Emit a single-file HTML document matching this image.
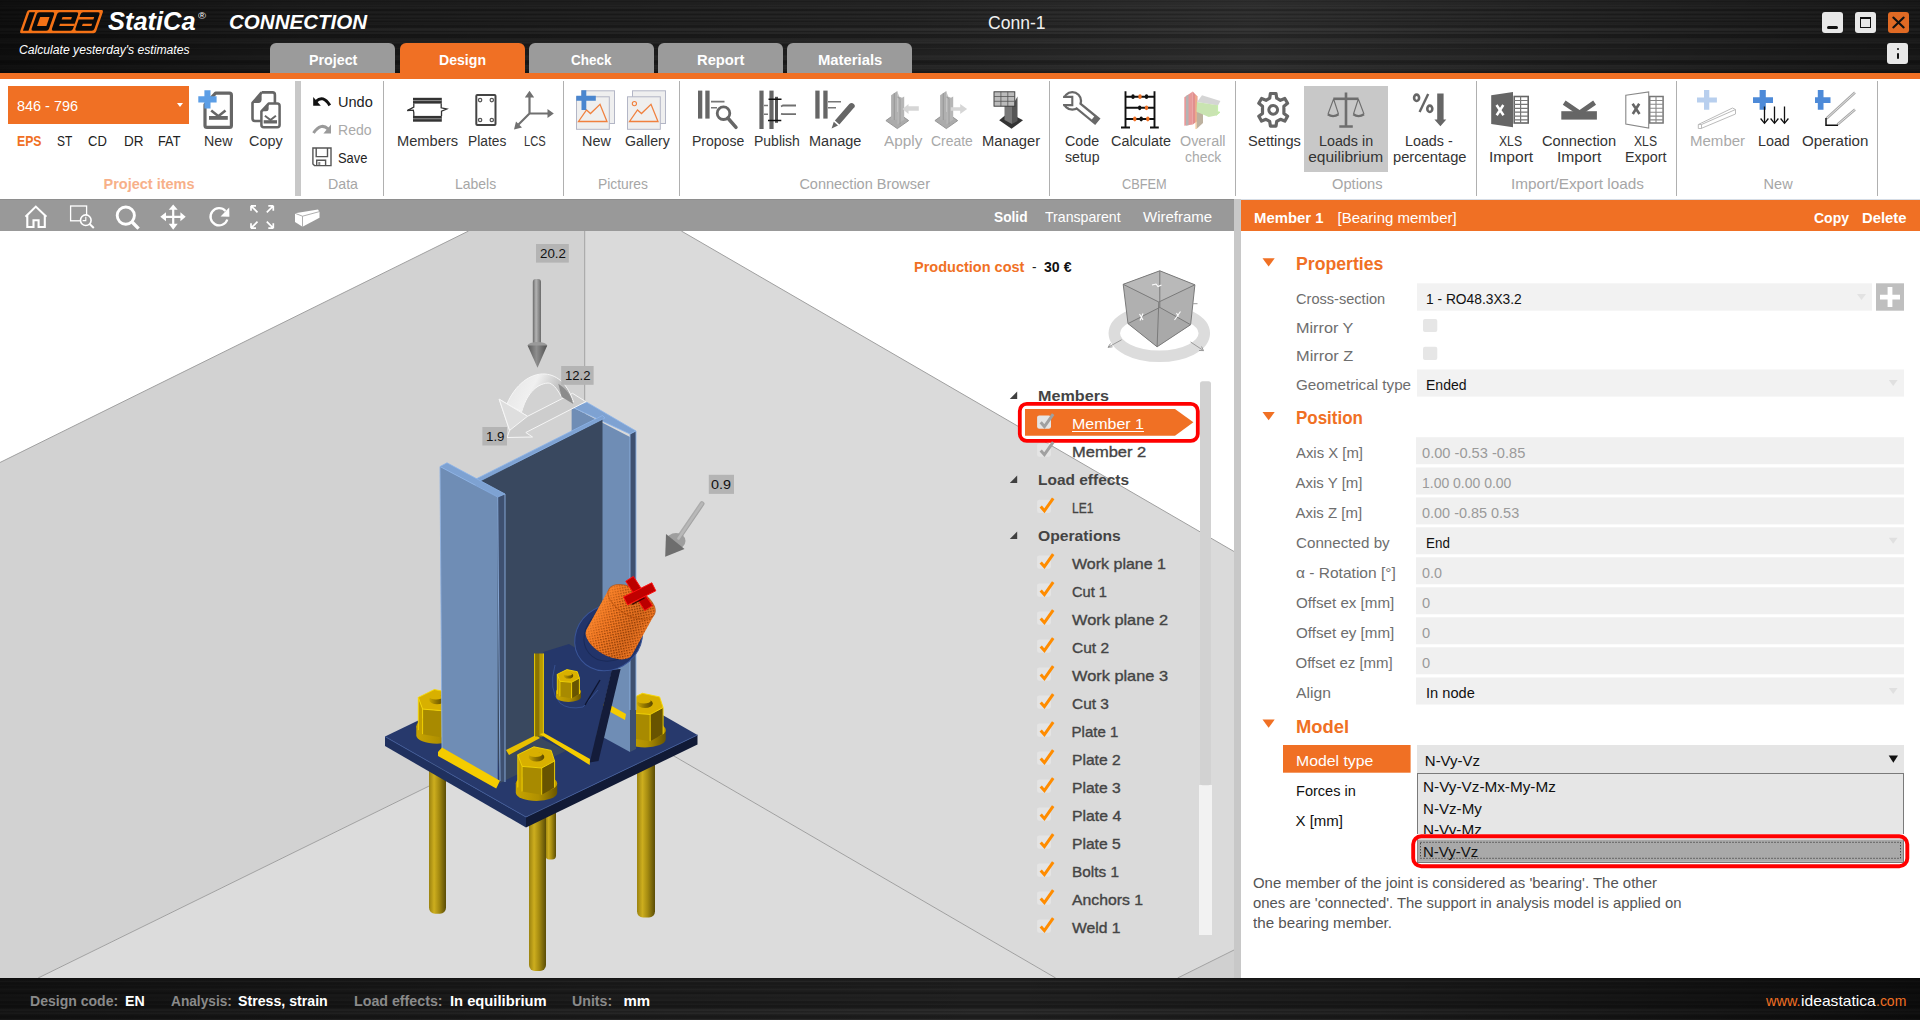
<!DOCTYPE html>
<html><head><meta charset="utf-8"><style>
*{margin:0;padding:0;box-sizing:border-box}
html,body{width:1920px;height:1020px;overflow:hidden;background:#fff;font-family:"Liberation Sans",sans-serif}
.a{position:absolute}
.t{position:absolute;white-space:pre;line-height:1;transform-origin:0 0}
svg{position:absolute;overflow:visible}
</style></head><body>
<!-- title bar -->
<div class="a" style="left:0;top:0;width:1920px;height:73px;background:linear-gradient(90deg, rgba(0,0,0,0.6) 0px, rgba(0,0,0,0.3) 300px, rgba(0,0,0,0.05) 900px, rgba(255,255,255,0.04) 1250px, rgba(0,0,0,0.05) 1550px, rgba(0,0,0,0.35) 1920px),linear-gradient(180deg,#252525 0px, #252525 1px,#1f1f1f 1px, #1f1f1f 2px,#242424 2px, #242424 3px,#242424 3px, #242424 4px,#242424 4px, #242424 5px,#292929 5px, #292929 6px,#232323 6px, #232323 7px,#2a2a2a 7px, #2a2a2a 8px,#272727 8px, #272727 9px,#1d1d1d 9px, #1d1d1d 10px,#1c1c1c 10px, #1c1c1c 11px,#262626 11px, #262626 12px,#292929 12px, #292929 13px,#242424 13px, #242424 14px,#1d1d1d 14px, #1d1d1d 15px,#252525 15px, #252525 16px,#292929 16px, #292929 17px,#242424 17px, #242424 18px,#1f1f1f 18px, #1f1f1f 19px,#292929 19px, #292929 20px,#232323 20px, #232323 21px,#1d1d1d 21px, #1d1d1d 22px,#252525 22px, #252525 23px,#242424 23px, #242424 24px,#262626 24px, #262626 25px,#1e1e1e 25px, #1e1e1e 26px,#1d1d1d 26px, #1d1d1d 27px,#202020 27px, #202020 28px,#2c2c2c 28px, #2c2c2c 29px,#303030 29px, #303030 30px,#2c2c2c 30px, #2c2c2c 31px,#202020 31px, #202020 32px,#292929 32px, #292929 33px,#2a2a2a 33px, #2a2a2a 34px,#1c1c1c 34px, #1c1c1c 35px,#1c1c1c 35px, #1c1c1c 36px,#1d1d1d 36px, #1d1d1d 37px,#1c1c1c 37px, #1c1c1c 38px,#262626 38px, #262626 39px,#282828 39px, #282828 40px,#2a2a2a 40px, #2a2a2a 41px,#272727 41px, #272727 42px,#2c2c2c 42px, #2c2c2c 43px,#262626 43px, #262626 44px,#1d1d1d 44px, #1d1d1d 45px,#1e1e1e 45px, #1e1e1e 46px,#1f1f1f 46px, #1f1f1f 47px,#1f1f1f 47px, #1f1f1f 48px,#272727 48px, #272727 49px,#1f1f1f 49px, #1f1f1f 50px,#202020 50px, #202020 51px,#212121 51px, #212121 52px,#212121 52px, #212121 53px,#212121 53px, #212121 54px,#212121 54px, #212121 55px,#272727 55px, #272727 56px,#2a2a2a 56px, #2a2a2a 57px,#282828 57px, #282828 58px,#272727 58px, #272727 59px,#282828 59px, #282828 60px,#1d1d1d 60px, #1d1d1d 61px,#1a1a1a 61px, #1a1a1a 62px,#191919 62px, #191919 63px,#1d1d1d 63px, #1d1d1d 64px,#1e1e1e 64px, #1e1e1e 65px,#292929 65px, #292929 66px,#272727 66px, #272727 67px,#262626 67px, #262626 68px,#282828 68px, #282828 69px,#212121 69px, #212121 70px,#222222 70px, #222222 71px,#1c1c1c 71px, #1c1c1c 72px,#1a1a1a 72px, #1a1a1a 73px)"></div>
<!-- tabs -->
<div class="a" style="left:270px;top:43px;width:125px;height:30px;background:#9b9b9b;border-radius:6px 6px 0 0"></div>
<div class="a" style="left:400px;top:43px;width:125px;height:30px;background:#f07024;border-radius:6px 6px 0 0"></div>
<div class="a" style="left:529px;top:43px;width:125px;height:30px;background:#9b9b9b;border-radius:6px 6px 0 0"></div>
<div class="a" style="left:658px;top:43px;width:125px;height:30px;background:#9b9b9b;border-radius:6px 6px 0 0"></div>
<div class="a" style="left:787px;top:43px;width:125px;height:30px;background:#9b9b9b;border-radius:6px 6px 0 0"></div>
<div class="a" style="left:0;top:73px;width:1920px;height:6px;background:#f07024"></div>
<!-- ribbon -->
<div class="a" style="left:0;top:79px;width:1920px;height:120px;background:#fff"></div>

<div class="a" style="left:8px;top:86px;width:181px;height:38px;background:#f07024"></div>
<svg style="left:0;top:0" width="1" height="1"><path d="M177 103 L183 103 L180 107 Z" fill="#fff"/></svg>
<div class="a" style="left:295px;top:81px;width:6px;height:115px;background:#c8c8c8"></div>
<div class="a" style="left:383px;top:81px;width:1px;height:115px;background:#b0b0b0"></div>
<div class="a" style="left:563px;top:81px;width:1px;height:115px;background:#b0b0b0"></div>
<div class="a" style="left:679px;top:81px;width:1px;height:115px;background:#b0b0b0"></div>
<div class="a" style="left:1049px;top:81px;width:1px;height:115px;background:#b0b0b0"></div>
<div class="a" style="left:1235px;top:81px;width:1px;height:115px;background:#b0b0b0"></div>
<div class="a" style="left:1476px;top:81px;width:1px;height:115px;background:#b0b0b0"></div>
<div class="a" style="left:1676px;top:81px;width:1px;height:115px;background:#b0b0b0"></div>
<div class="a" style="left:1877px;top:81px;width:1px;height:115px;background:#b0b0b0"></div>
<div class="a" style="left:1304px;top:86px;width:84px;height:86px;background:#c8c8c8"></div>
<!-- viewport toolbar -->
<div class="a" style="left:0;top:199px;width:1234px;height:32px;background:#999999;border-top:1px solid #8e8e8e"></div>
<div class="a" style="left:1234px;top:199px;width:7px;height:779px;background:#c8c8c8"></div>
<!-- right panel -->
<div class="a" style="left:1241px;top:199px;width:679px;height:32px;background:#f07024;border-top:1px solid #d6dde6"></div>
<div class="a" style="left:1241px;top:231px;width:679px;height:747px;background:#fff"></div>
<!-- status bar -->
<div class="a" style="left:0;top:978px;width:1920px;height:42px;background:linear-gradient(90deg, rgba(0,0,0,0.45) 0px, rgba(0,0,0,0.15) 600px, rgba(0,0,0,0) 1000px, rgba(0,0,0,0.2) 1400px, rgba(0,0,0,0.6) 1920px),linear-gradient(180deg,#191919 0px, #191919 1px,#1e1e1e 1px, #1e1e1e 2px,#1f1f1f 2px, #1f1f1f 3px,#282828 3px, #282828 4px,#1d1d1d 4px, #1d1d1d 5px,#1b1b1b 5px, #1b1b1b 6px,#1c1c1c 6px, #1c1c1c 7px,#202020 7px, #202020 8px,#1b1b1b 8px, #1b1b1b 9px,#1c1c1c 9px, #1c1c1c 10px,#202020 10px, #202020 11px,#252525 11px, #252525 12px,#202020 12px, #202020 13px,#1e1e1e 13px, #1e1e1e 14px,#1a1a1a 14px, #1a1a1a 15px,#191919 15px, #191919 16px,#212121 16px, #212121 17px,#232323 17px, #232323 18px,#212121 18px, #212121 19px,#1f1f1f 19px, #1f1f1f 20px,#202020 20px, #202020 21px,#222222 21px, #222222 22px,#232323 22px, #232323 23px,#1b1b1b 23px, #1b1b1b 24px,#1a1a1a 24px, #1a1a1a 25px,#1d1d1d 25px, #1d1d1d 26px,#202020 26px, #202020 27px,#191919 27px, #191919 28px,#191919 28px, #191919 29px,#1b1b1b 29px, #1b1b1b 30px,#212121 30px, #212121 31px,#2b2b2b 31px, #2b2b2b 32px,#2c2c2c 32px, #2c2c2c 33px,#232323 33px, #232323 34px,#272727 34px, #272727 35px,#2c2c2c 35px, #2c2c2c 36px,#222222 36px, #222222 37px,#1e1e1e 37px, #1e1e1e 38px,#1b1b1b 38px, #1b1b1b 39px,#1c1c1c 39px, #1c1c1c 40px,#1e1e1e 40px, #1e1e1e 41px,#2c2c2c 41px, #2c2c2c 42px)"></div>
<!-- logo -->
<svg style="left:0;top:0" width="1" height="1">
 <g transform="translate(0,9.9) skewX(-19.2)">
  <rect x="27.6" y="0" width="76" height="23.3" rx="2" fill="#f47216"/>
  <rect x="30.2" y="2.3" width="5.6" height="18.6" fill="#0a0a0a"/>
  <rect x="38.2" y="2.3" width="17.4" height="18.6" rx="2" fill="#0a0a0a"/>
  <rect x="42.6" y="7" width="9.4" height="9" fill="#f47216"/>
  <rect x="58.5" y="2.3" width="21.1" height="18.6" rx="2" fill="#0a0a0a"/>
  <rect x="65" y="7.2" width="9.4" height="2.3" fill="#f47216"/>
  <rect x="64.8" y="13.9" width="15" height="2.2" fill="#f47216"/>
  <rect x="82" y="2.3" width="19" height="18.6" rx="2" fill="#0a0a0a"/>
  <rect x="81.5" y="7.2" width="15.2" height="2.3" fill="#f47216"/>
  <rect x="87.6" y="13.9" width="9.4" height="2.2" fill="#f47216"/>
 </g>
</svg>
<div class="a" style="left:1822px;top:12px;width:21px;height:21px;background:#e8e8e8;border-radius:3px"></div>
<div class="a" style="left:1827px;top:26px;width:11px;height:2.6px;background:#111;border-radius:2px"></div>
<div class="a" style="left:1855px;top:12px;width:21px;height:21px;background:#e8e8e8;border-radius:3px"></div>
<div class="a" style="left:1860px;top:17px;width:11px;height:11px;border:1.6px solid #111;border-top-width:2.4px"></div>
<div class="a" style="left:1888px;top:12px;width:21px;height:21px;background:#e06a24;border-radius:3px"></div>
<svg style="left:0;top:0" width="1" height="1"><path d="M1893.3 17.6 L1903.7 27.4 M1903.7 17.6 L1893.3 27.4" stroke="#111" stroke-width="2.1" stroke-linecap="round"/></svg>
<div class="a" style="left:1887px;top:43px;width:21px;height:21px;background:#e8e8e8;border-radius:3px"></div>
<div class="a" style="left:1897.3px;top:48.4px;width:2px;height:2px;background:#111;border-radius:1px"></div>
<div class="a" style="left:1897.2px;top:52.8px;width:2.2px;height:6.4px;background:#111;border-radius:1px"></div>

<svg style="left:0;top:0" width="1920" height="200" viewBox="0 0 1920 200">
<!-- New (project) -->
<path d="M215.6 93.2 H229.5 Q231.4 93.2 231.4 95.2 V125.5 Q231.4 127.4 229.5 127.4 H207 Q205 127.4 205 125.5 V104.5 Z" fill="none" stroke="#666" stroke-width="3.2" stroke-linejoin="round"/>
<path d="M209 116 H227.8 V119.8 H209 Z" fill="#666"/>
<path d="M211.2 110.4 L218.4 116.2 L225.5 110.4" fill="none" stroke="#666" stroke-width="2.6"/>
<path d="M204.4 90.2 H210.5 V96.3 H216.6 V102.4 H210.5 V108.5 H204.4 V102.4 H198.3 V96.3 H204.4 Z" fill="#5c9ee6"/>
<!-- Copy -->
<path d="M261.6 92.4 H272.5 Q274.9 92.4 274.9 94.8 V103 M261.5 121 H254.8 Q252.5 121 252.5 118.6 V102.9 L261.6 92.4" fill="none" stroke="#666" stroke-width="2.6" stroke-linejoin="round"/>
<path d="M252.5 102.9 L261.6 92.4 V99.5 Q261.6 102.9 258.4 102.9 Z" fill="#666"/>
<path d="M268.6 103.6 H277.3 Q279.6 103.6 279.6 106 V125 Q279.6 127.2 277.3 127.2 H263.8 Q261.4 127.2 261.4 125 V111.3 Z" fill="#fff" stroke="#666" stroke-width="2.5" stroke-linejoin="round"/>
<path d="M261.4 111.3 L268.6 103.6 V108.8 Q268.6 111.3 266 111.3 Z" fill="#666"/>
<path d="M263.7 120.2 H277 V123.5 H263.7 Z" fill="#666"/>
<path d="M264.9 115.8 L270.5 120 L275.9 115.8" fill="none" stroke="#666" stroke-width="2"/>
<!-- Undo / Redo / Save -->
<path d="M313.2 97 V105.7 H320.8 Z" fill="#111"/>
<path d="M316.2 101.3 Q323 94.5 329.8 105.4" fill="none" stroke="#111" stroke-width="3"/>
<path d="M331 124.6 V133.5 H323.4 Z" fill="#9a9a9a"/>
<path d="M328 128.9 Q321 122.3 313.5 133" fill="none" stroke="#9a9a9a" stroke-width="3"/>
<path d="M312.9 148 H331 V165.6 H314.5 L312.9 164 Z" fill="none" stroke="#555" stroke-width="1.4"/>
<path d="M316.2 148 V156.6 H327.5 V148" fill="none" stroke="#555" stroke-width="1.4"/>
<path d="M316.7 165.6 V160.2 H325.6 V165.6" fill="none" stroke="#555" stroke-width="1.4"/>
<rect x="318.3" y="162" width="2" height="3" fill="#888"/>
<!-- Members -->
<rect x="413" y="97.8" width="28.8" height="5.8" fill="#333"/>
<rect x="413" y="115.9" width="28.8" height="5.8" fill="#333"/>
<rect x="413" y="100" width="28.8" height="1.1" fill="#8a8a8a"/>
<rect x="413" y="118.2" width="28.8" height="1.1" fill="#8a8a8a"/>
<path d="M413 97 V122.5 M441.8 97 V122.5" stroke="#333" stroke-width="1.2" fill="none" opacity="0"/>
<path d="M413.8 103.5 V107.2 L407.2 110.6 L413.3 110.2 L413.8 112.5 V116 M441.2 103.5 V107.8 L446.8 109 L441.5 111.2 V116" fill="none" stroke="#333" stroke-width="1.3"/>
<!-- Plates -->
<rect x="476.3" y="95" width="19.2" height="30" rx="1" fill="none" stroke="#444" stroke-width="2"/>
<g fill="none" stroke="#555" stroke-width="1.2"><circle cx="480.1" cy="100.1" r="1.7"/><circle cx="491.8" cy="100.1" r="1.7"/><circle cx="480.1" cy="120" r="1.7"/><circle cx="491.8" cy="120" r="1.7"/></g>
<!-- LCS -->
<path d="M529.5 113.5 V96 M529.5 113.5 H548 M529.5 113.5 L518.5 124.5" fill="none" stroke="#707070" stroke-width="2.2"/>
<path d="M524.8 97.5 L529.5 90.8 L534.2 97.5 Z M547.5 109 L553.8 113.5 L547.5 118 Z M514 129.5 L516 121.5 L522 127.5 Z" fill="#707070"/>
<!-- Pictures New -->
<rect x="581.5" y="90.8" width="33" height="32.7" fill="#efefef" stroke="#b3b6c6" stroke-width="1"/>
<rect x="576.5" y="96.8" width="32.8" height="32.5" fill="#efefef" stroke="#b3b6c6" stroke-width="1"/>
<path d="M578.5 121.5 L586.5 110 L590.5 113.5 L600 104.3 L607 121.5 Z" fill="none" stroke="#f0803e" stroke-width="1.3"/>
<path d="M581.5 90.3 H586.3 V95.8 H595.8 V100.8 H586.3 V110 H581.5 V100.8 H576.3 V95.8 H581.5 Z" fill="#4a86cf"/>
<!-- Gallery -->
<rect x="632.5" y="90.8" width="33" height="32.7" fill="#efefef" stroke="#b3b6c6" stroke-width="1"/>
<rect x="627.5" y="96.8" width="32.8" height="32.5" fill="#efefef" stroke="#b3b6c6" stroke-width="1"/>
<path d="M629.5 121.5 L637.5 110 L641.5 113.5 L651 104.3 L658 121.5 Z" fill="none" stroke="#f0803e" stroke-width="1.3"/>
<circle cx="634.4" cy="103.6" r="2.1" fill="none" stroke="#f0803e" stroke-width="1.1"/>
<!-- Propose -->
<rect x="698" y="90.6" width="4.3" height="28" fill="#666"/><rect x="705.3" y="90.6" width="4.3" height="28" fill="#666"/>
<path d="M711 101.6 H724.5 M711 107.8 H717" stroke="#777" stroke-width="1.6"/>
<circle cx="723.5" cy="113.2" r="6.3" fill="#fff" stroke="#666" stroke-width="2.8"/>
<path d="M727.8 118 L736 127.3" stroke="#666" stroke-width="3.5" stroke-linecap="round"/>
<!-- Publish -->
<rect x="759.4" y="90.6" width="4.2" height="38.4" fill="#666"/><rect x="769.4" y="90.6" width="4.2" height="38.4" fill="#666"/>
<path d="M764 105.5 H768 M764 114.2 H768" stroke="#777" stroke-width="1.6"/>
<rect x="775" y="96.8" width="3" height="26" fill="#555"/>
<path d="M768.5 99.3 H781.5 M768 120.5 H781.3" stroke="#111" stroke-width="1.6"/>
<path d="M781 106.5 L783 105.5 H796 M781 113.8 L783 114.2 H796" fill="none" stroke="#707070" stroke-width="1.8"/>
<!-- Manage -->
<rect x="815.3" y="90.6" width="4.3" height="28" fill="#666"/><rect x="823.3" y="90.6" width="4.3" height="28" fill="#666"/>
<path d="M828 101.8 H841 M828 107.8 H836" stroke="#777" stroke-width="1.6"/>
<path d="M839.4 124.4 L834.9 120.4 L849.3 104.1 Q851.5 101.8 853.8 104 Q856 106.2 853.7 108.1 Z" fill="#666"/>
<path d="M833.8 121.8 L838 125.6 L831.6 128.6 Z" fill="#666"/>
<!-- Apply (disabled) -->
<g transform="translate(0 0)">
<path d="M885.9 120.6 L897.3 112.4 L908.7 120.6 L897.3 128.6 Z" fill="#ababab" stroke="#8e8e8e" stroke-width="0.9"/>
<path d="M891.1 95.2 L897.3 90.9 V119.5 L891.1 120.1 Z" fill="#b0b0b0"/>
<path d="M894.3 93 V120" stroke="#909090" stroke-width="0.8"/>
<path d="M897.3 90.9 V124.6 L904.2 119.8 V96.5 L902 97.8 L899 96.5 Z" fill="#b6b6b6"/>
<path d="M897.3 97 L900 98.5 V124.3" stroke="#959595" stroke-width="0.8" fill="none"/>
</g>
<path d="M902.5 109 L908.5 104 V106.3 H918.8 V110.7 H908.5 V114 Z" fill="#d6d6d6"/>
<!-- Create (disabled) -->
<g transform="translate(49 0)">
<path d="M885.9 120.6 L897.3 112.4 L908.7 120.6 L897.3 128.6 Z" fill="#ababab" stroke="#8e8e8e" stroke-width="0.9"/>
<path d="M891.1 95.2 L897.3 90.9 V119.5 L891.1 120.1 Z" fill="#b0b0b0"/>
<path d="M894.3 93 V120" stroke="#909090" stroke-width="0.8"/>
<path d="M897.3 90.9 V124.6 L904.2 119.8 V96.5 L902 97.8 L899 96.5 Z" fill="#b6b6b6"/>
<path d="M897.3 97 L900 98.5 V124.3" stroke="#959595" stroke-width="0.8" fill="none"/>
</g>
<path d="M967.1 109 L960.2 104 V107.3 H950.8 V110.7 H960.2 V114 Z" fill="#d6d6d6"/>
<!-- Manager -->
<path d="M999.2 120.3 L1008.6 112.5 L1023 120.3 L1011.5 128.7 Z" fill="#333"/>
<path d="M1004.5 106 H1012 V124 L1004.5 120 Z" fill="#777"/><path d="M1012 106 L1017.5 96.5 V121 L1012 124 Z" fill="#555"/>
<rect x="994" y="91.8" width="20.8" height="14.4" fill="#bbb" stroke="#333" stroke-width="0.9"/>
<path d="M994 96.5 H1014.8 M994 101.3 H1014.8 M1000.9 91.8 V106.2 M1007.8 91.8 V106.2" stroke="#555" stroke-width="0.8"/>
<!-- Code setup (wrench) -->
<path d="M1072.3 100.9 L1094.6 119.2" stroke="#686868" stroke-width="8.4" stroke-linecap="square"/>
<circle cx="1072.3" cy="100.9" r="9.9" fill="#686868"/>
<circle cx="1072.3" cy="100.9" r="7.6" fill="#fff"/>
<path d="M1076 104 L1093 117.9" stroke="#fff" stroke-width="3.9"/>
<rect x="1060" y="97.9" width="12.3" height="6.2" fill="#fff"/>
<path d="M1063.2 96.9 H1072.3 V105.1 H1063.2" fill="none" stroke="#686868" stroke-width="2.1"/>
<!-- Calculate (abacus) -->
<path d="M1125.5 91.2 V127.5 M1154.5 91.2 V127.5 M1121 127.5 H1130 M1150 127.5 H1158.8 M1125.5 96.7 H1154.5 M1125.5 107.8 H1154.5 M1125.5 119 H1154.5" fill="none" stroke="#111" stroke-width="1.9"/>
<g fill="#111"><ellipse cx="1133" cy="96.7" rx="1.7" ry="2.4"/><ellipse cx="1146.5" cy="96.7" rx="1.7" ry="2.4"/><ellipse cx="1139.7" cy="107.8" rx="1.7" ry="2.4"/><ellipse cx="1141.2" cy="119" rx="1.7" ry="2.4"/></g>
<g fill="#f07024"><ellipse cx="1140" cy="96.7" rx="1.7" ry="2.4"/><ellipse cx="1146.5" cy="107.8" rx="1.7" ry="2.4"/><ellipse cx="1134.8" cy="119" rx="1.7" ry="2.4"/><ellipse cx="1147.8" cy="119" rx="1.7" ry="2.4"/></g>
<!-- Overall check -->
<g opacity="0.75">
<path d="M1184.3 97.2 L1192.8 91.6 V124.5 L1184.3 125.8 Z" fill="#e07878"/>
<path d="M1186 96 L1188.5 94.5 V125.2 L1186 125.6 Z" fill="#9a9a9a"/>
<path d="M1192.8 91.6 L1197.5 96.5 V121 L1192.8 124.5 Z" fill="#d86a6a"/>
<path d="M1196.5 113 L1203 107 V123 L1196.5 129 Z" fill="#a89880"/>
<path d="M1196 95.3 V129" stroke="#f5b060" stroke-width="1"/>
<path d="M1197 101.9 L1202 95.3 L1220.4 100.9 L1218 105.6 Z" fill="#c8c8c8"/>
<path d="M1197 101.9 L1217.6 105.2 V111.7 L1220 112.2 L1216.2 115.5 L1208.7 116.9 L1196.5 111.7 Z" fill="#b8dc98"/>
<path d="M1217.6 105.2 V111.7 L1220 112.2 L1216.2 115.5" fill="none" stroke="#a8e880" stroke-width="0.8"/>
</g>
<!-- Settings gear -->
<g transform="translate(1273.2,109.8)">
<path d="M-2.8 -16.3 H2.8 L3.5 -11.6 L7.2 -9.5 L11.6 -11.3 L14.4 -6.5 L10.7 -3.6 V3.6 L14.4 6.5 L11.6 11.3 L7.2 9.5 L3.5 11.6 L2.8 16.3 H-2.8 L-3.5 11.6 L-7.2 9.5 L-11.6 11.3 L-14.4 6.5 L-10.7 3.6 V-3.6 L-14.4 -6.5 L-11.6 -11.3 L-7.2 -9.5 L-3.5 -11.6 Z" fill="none" stroke="#666" stroke-width="3.2" stroke-linejoin="round"/>
<circle r="4.4" fill="none" stroke="#666" stroke-width="3"/>
</g>
<!-- Loads in equilibrium (scale) -->
<g stroke="#6e6e6e" fill="none">
<path d="M1346 92.5 V126.5 M1339.3 126.5 H1352.8" stroke-width="2.6"/>
<path d="M1333.3 98.8 H1358.5" stroke-width="2.6"/>
<path d="M1333.6 99 L1328 114 M1333.6 99 L1338.5 114 M1358.3 99 L1353.5 114 M1358.3 99 L1364 114" stroke-width="1.1"/>
<path d="M1327.8 114.3 Q1333 118 1338.6 114.3 M1353.3 114.3 Q1358.5 118 1364 114.3" stroke-width="2.4"/>
</g>
<!-- Loads percentage -->
<path d="M1437.2 93.5 H1443.6 V119.4 H1446.3 L1440.4 126.3 L1434.4 119.4 H1437.2 Z" fill="#666"/>
<g fill="none" stroke="#666"><ellipse cx="1416.6" cy="97.8" rx="2.5" ry="3.2" stroke-width="2.6"/><ellipse cx="1429.8" cy="108.8" rx="2.5" ry="3.2" stroke-width="2.6"/><path d="M1428.2 94 L1419.6 112" stroke-width="2.4"/></g>
<!-- XLS Import -->
<path d="M1491.2 95.3 L1513 92 V127.3 L1491.2 124 Z" fill="#666"/>
<path d="M1496.5 105 L1503.5 115.2 M1503.3 105 L1496.7 115.2" stroke="#fff" stroke-width="2.5"/>
<rect x="1514.2" y="96.5" width="14" height="26.5" fill="#fff" stroke="#666" stroke-width="1.6"/>
<path d="M1514 100.5 H1528 M1514 104.3 H1528 M1514 108.3 H1528 M1514 112.2 H1528 M1514 116.1 H1528 M1514 119.9 H1528 M1520.6 96.5 V123" stroke="#777" stroke-width="1.2"/>
<!-- Connection Import -->
<rect x="1561.3" y="111.2" width="35.6" height="8.4" fill="#666"/>
<path d="M1564.2 102.6 L1579.6 113 L1594.6 102.6" fill="none" stroke="#666" stroke-width="5"/>
<!-- XLS Export -->
<path d="M1625.8 95.3 L1648.7 92 V128 L1625.8 124 Z" fill="#fff" stroke="#888" stroke-width="1.1"/>
<path d="M1632.6 103.8 L1639.5 114 M1639.2 103.8 L1632.8 114" stroke="#666" stroke-width="2.6"/>
<rect x="1649.7" y="96.5" width="13.4" height="26.5" fill="#fff" stroke="#777" stroke-width="1.5"/>
<path d="M1650 100.5 H1663 M1650 104.3 H1663 M1650 108.3 H1663 M1650 112.2 H1663 M1650 116.1 H1663 M1650 119.9 H1663 M1656 96.5 V123" stroke="#888" stroke-width="1.1"/>
<!-- New Member (disabled) -->
<path d="M1704 90 H1709.3 V97.5 H1716.9 V102.5 H1709.3 V109.8 H1704 V102.5 H1697 V97.5 H1704 Z" fill="#b8cfee"/>
<path d="M1698.3 124.5 L1732.5 108 L1735.5 109.5 V114 L1701 128.5 H1698.3 Z M1698.3 124.5 H1701.5 L1735.5 109.5 M1701.5 124.5 V128.5" fill="none" stroke="#bbb" stroke-width="1"/>
<!-- Load -->
<path d="M1759.6 90 H1765.8 V97.3 H1773 V103 H1765.8 V109.8 H1759.6 V103 H1753 V97.3 H1759.6 Z" fill="#4d8ad8"/>
<path d="M1764.5 106.5 V123 M1774.5 106.5 V123 M1784.5 106.5 V123" stroke="#111" stroke-width="1.3"/>
<path d="M1760.6 118.5 L1764.5 123.3 L1768.4 118.5 M1770.6 118.5 L1774.5 123.3 L1778.4 118.5 M1780.6 118.5 L1784.5 123.3 L1788.4 118.5" fill="none" stroke="#111" stroke-width="1.3"/>
<!-- Operation -->
<path d="M1817.8 90 H1823.5 V97.3 H1830.5 V103 H1823.5 V109.8 H1817.8 V103 H1815 V97.3 H1817.8 Z" fill="#4d8ad8"/>
<path d="M1826.5 118.5 L1855 92.5 M1837.5 124.5 L1855 109.5" fill="none" stroke="#a8a8a8" stroke-width="2.6"/>
<path d="M1826.5 118.5 L1855 92.5 M1837.5 124.5 L1855 109.5" fill="none" stroke="#e8e8e8" stroke-width="0.9"/>
<path d="M1826 118 V125.3 H1838" fill="none" stroke="#111" stroke-width="1.5"/>
</svg>

<svg style="left:0;top:0" width="1234" height="978" viewBox="0 0 1234 978">
<defs>
 <clipPath id="vpc"><rect x="0" y="231" width="1234" height="747"/></clipPath>
</defs>
<g clip-path="url(#vpc)">
 <rect x="0" y="231" width="1234" height="747" fill="#ffffff"/>
 <path d="M0 462.5 L468.6 231 L584.7 231 L585 709.5 L38.1 978 L0 978 Z" fill="#d2d2d2"/>
 <path d="M584.7 231 L681.3 231 L1234 551.5 L1234 950 L1177.7 978 L1055.7 978 L585 704.3 Z" fill="#dadada"/>
 <path d="M38.1 978 L585 709.5 L585 704.3 L1055.7 978 Z" fill="#dcdcdc"/>
 <path d="M1177.7 978 L1234 950 V978 Z" fill="#d0d0d0"/>
 <g stroke="#a0a0a0" stroke-width="1" fill="none">
  <path d="M0 462.5 L468.6 231"/><path d="M681.3 231 L1234 551.5"/><path d="M584.7 231 V708"/>
  <path d="M38.1 978 L585 709.5"/><path d="M585 704.3 L1055.7 978"/><path d="M1177.7 978 L1234 950"/>
 </g>
</g>
</svg>

<svg style="left:0;top:0" width="1234" height="978" viewBox="0 0 1234 978">
<defs>
 <linearGradient id="rod" x1="0" x2="1" y1="0" y2="0">
  <stop offset="0" stop-color="#9a8210"/><stop offset="0.3" stop-color="#cdae1e"/><stop offset="0.6" stop-color="#a48a10"/><stop offset="1" stop-color="#5a4c06"/>
 </linearGradient>
 <linearGradient id="washg" x1="0" x2="1" y1="0" y2="0">
  <stop offset="0" stop-color="#c8a400"/><stop offset="0.55" stop-color="#b09000"/><stop offset="1" stop-color="#6a5600"/>
 </linearGradient>
 <linearGradient id="boltg" x1="0" x2="1" y1="0" y2="0">
  <stop offset="0" stop-color="#c8a400"/><stop offset="0.5" stop-color="#8a7000"/><stop offset="1" stop-color="#5a4800"/>
 </linearGradient>
 <linearGradient id="shaft" x1="0" x2="1" y1="0" y2="0">
  <stop offset="0" stop-color="#6a6a6a"/><stop offset="0.4" stop-color="#b4b4b4"/><stop offset="1" stop-color="#6a6a6a"/>
 </linearGradient>
 <linearGradient id="cone" x1="0" x2="1" y1="0" y2="0">
  <stop offset="0" stop-color="#5a5a5a"/><stop offset="0.45" stop-color="#8e8e8e"/><stop offset="1" stop-color="#505050"/>
 </linearGradient>
 <linearGradient id="shaft2" x1="0" x2="1" y1="0" y2="1">
  <stop offset="0" stop-color="#d0d0d0"/><stop offset="0.5" stop-color="#a8a8a8"/><stop offset="1" stop-color="#777"/>
 </linearGradient>
 <linearGradient id="archg" x1="0" x2="1" y1="0" y2="0.3">
  <stop offset="0" stop-color="#e4e4e4"/><stop offset="0.45" stop-color="#f0f0f0"/><stop offset="1" stop-color="#a8a8a8"/>
 </linearGradient>
 <linearGradient id="tubeg" x1="0" x2="1" y1="0" y2="0">
  <stop offset="0" stop-color="#ff8a30" stop-opacity="0.75"/><stop offset="0.35" stop-color="#f47a24" stop-opacity="0.15"/><stop offset="0.7" stop-color="#602000" stop-opacity="0.12"/><stop offset="1" stop-color="#f47a24" stop-opacity="0.3"/>
 </linearGradient>
 <pattern id="hatch" width="2.6" height="2.6" patternUnits="userSpaceOnUse" patternTransform="rotate(-40)">
  <rect width="2.6" height="2.6" fill="#f47a24"/><rect width="1.5" height="1.3" fill="#8a3a04"/>
 </pattern>
</defs>

<rect x="545.5" y="800" width="10.5" height="59.6" rx="4" fill="url(#rod)"/>
<rect x="429" y="740" width="17" height="173.7" rx="6" fill="url(#rod)"/>
<rect x="637" y="740" width="18" height="177.5" rx="6" fill="url(#rod)"/>
<rect x="529" y="800" width="17" height="171" rx="6" fill="url(#rod)"/>
<path d="M385 736.6 L526 817 V827.5 L385 746 Z" fill="#1f305e"/>
<path d="M526 817 L697.5 735 V744.5 L526 827.5 Z" fill="#111a36"/>
<path d="M385 736.6 L556 654 L697.5 735 L526 817 Z" fill="#27396c"/>
<path d="M385 736.6 L526 817 L697.5 735" fill="none" stroke="#3f5a98" stroke-width="0.9"/>
<path d="M416.3 726.2 V735.2 A20.7 8.5 0 0 0 457.7 735.2 V726.2 Z" fill="url(#washg)"/>
<ellipse cx="437.0" cy="726.2" rx="20.7" ry="8.5" fill="#c09c00"/>
<polygon points="418.3,697.4 422.6,709.1 422.6,734.2 418.3,730.2" fill="#c4a000"/>
<polygon points="422.6,709.1 442.2,710.7 442.2,737.4 422.6,734.2" fill="#a88a00"/>
<polygon points="442.2,710.7 455.1,703.7 455.1,730.3 442.2,737.4" fill="#685400"/>
<polygon points="418.3,697.4 434.4,689.5 451.6,693.1 455.1,703.7 442.2,710.7 422.6,709.1" fill="#d8b000"/>
<polyline points="418.3,730.2 418.3,697.4 434.4,689.5 451.6,693.1 455.1,703.7 455.1,730.3" fill="none" stroke="#f8d800" stroke-width="0.9"/>
<polyline points="418.3,697.4 422.6,709.1 442.2,710.7 455.1,703.7" fill="none" stroke="#f8d800" stroke-width="0.9"/>
<path d="M422.6 709.1 V734.2 M442.2 710.7 V737.4" stroke="#f8d800" stroke-width="0.9"/>
<ellipse cx="437.0" cy="699.7" rx="7.8" ry="4.6" fill="url(#boltg)"/>
<ellipse cx="436.0" cy="697.0" rx="6.8" ry="2.6" fill="#d8b000"/>
<path d="M624.3 730.0 V739.0 A20.7 8.5 0 0 0 665.7 739.0 V730.0 Z" fill="url(#washg)"/>
<ellipse cx="645.0" cy="730.0" rx="20.7" ry="8.5" fill="#c09c00"/>
<polygon points="626.3,701.2 630.6,712.9 630.6,738.0 626.3,734.0" fill="#c4a000"/>
<polygon points="630.6,712.9 650.2,714.5 650.2,741.2 630.6,738.0" fill="#a88a00"/>
<polygon points="650.2,714.5 663.1,707.5 663.1,734.1 650.2,741.2" fill="#685400"/>
<polygon points="626.3,701.2 642.4,693.3 659.6,696.9 663.1,707.5 650.2,714.5 630.6,712.9" fill="#d8b000"/>
<polyline points="626.3,734.0 626.3,701.2 642.4,693.3 659.6,696.9 663.1,707.5 663.1,734.1" fill="none" stroke="#f8d800" stroke-width="0.9"/>
<polyline points="626.3,701.2 630.6,712.9 650.2,714.5 663.1,707.5" fill="none" stroke="#f8d800" stroke-width="0.9"/>
<path d="M630.6 712.9 V738.0 M650.2 714.5 V741.2" stroke="#f8d800" stroke-width="0.9"/>
<ellipse cx="645.0" cy="703.5" rx="7.8" ry="4.6" fill="url(#boltg)"/>
<ellipse cx="644.0" cy="700.8" rx="6.8" ry="2.6" fill="#d8b000"/>
<path d="M571.6 406.8 L630 437 V752 L571.6 720 Z" fill="#6f8db5"/>
<path d="M630 434 L636 431 V749 L630 752 Z" fill="#3e5070"/>
<path d="M571.6 406.8 L587 402.4 L636 431 L630 434 Z" fill="#7ea2d2" stroke="#8cb4ea" stroke-width="0.8"/>
<path d="M636 431 V710 M630 434 V710" stroke="#8db0e0" stroke-width="0.9"/>
<path d="M603 701 L626 714 L625 720 L603 708 Z" fill="#f5cc00"/>
<path d="M475 481 L602.5 417 V733 L500 783 Z" fill="#39485f"/>
<path d="M474 480 L602.5 415.5 L605 418 L477 482.5 Z" fill="#7ea2d2" stroke="#8cb4ea" stroke-width="0.8"/>
<path d="M440 466.6 L497.7 497 V781 L442 748 Z" fill="#6f8db5"/>
<path d="M497.7 497 L505 494 V782 L500 781 Z" fill="#3e5070"/>
<path d="M440 466.6 L447 462.8 L505 494 L497.7 497 Z" fill="#7ea2d2" stroke="#8cb4ea" stroke-width="0.8"/>
<path d="M440 466.6 L442 748 M497.7 497 L500 781 M505 494 V782" stroke="#8db0e0" stroke-width="0.9" fill="none"/>
<path d="M438 752 L442 747.6 L500 780.7 L496.2 788.4 L438 756 Z" fill="#f5cc00"/>
<path d="M506 750 L536 735 L540 738 L509 755 Z" fill="#e8c000"/>
<path d="M543.4 652 L569 644 L612 670 L589.7 762.4 L541.9 738.8 Z" fill="#25376a"/>
<path d="M611.8 669.7 L620.6 669 L598.5 760.9 L589.7 762.4 Z" fill="#141c3a"/>
<path d="M555 665 Q548 690 560 703 Q568 710 583 707 L598 690" fill="none" stroke="#3a5598" stroke-width="0.8"/>
<path d="M600 680 L585 705" stroke="#0e1530" stroke-width="1.4"/>
<rect x="534.6" y="653.5" width="4.6" height="83" fill="#8a7400"/><rect x="539.2" y="653.5" width="4.2" height="83" fill="#b89a00"/>
<path d="M534.6 653.5 V737 M543.4 653.5 V735" stroke="#f8d800" stroke-width="0.9"/>
<path d="M539.7 734 L544 733 L590 759 L589.7 765 Z" fill="#f5cc00"/>
<ellipse cx="608.6" cy="637.6" rx="35.5" ry="31.5" transform="rotate(-40 608.6 637.6)" fill="#22346a" stroke="#3a5598" stroke-width="1"/>
<ellipse cx="612" cy="634" rx="30" ry="25" transform="rotate(-40 612 634)" fill="none" stroke="#1a2a58" stroke-width="1"/>
<path d="M556.1 691.6 V697.0 A12.4 5.1 0 0 0 580.9 697.0 V691.6 Z" fill="url(#washg)"/>
<ellipse cx="568.5" cy="691.6" rx="12.4" ry="5.1" fill="#c09c00"/>
<polygon points="557.3,674.3 559.9,681.3 559.9,696.4 557.3,694.0" fill="#c4a000"/>
<polygon points="559.9,681.3 571.6,682.3 571.6,698.3 559.9,696.4" fill="#a88a00"/>
<polygon points="571.6,682.3 579.4,678.1 579.4,694.1 571.6,698.3" fill="#685400"/>
<polygon points="557.3,674.3 566.9,669.6 577.3,671.7 579.4,678.1 571.6,682.3 559.9,681.3" fill="#d8b000"/>
<polyline points="557.3,694.0 557.3,674.3 566.9,669.6 577.3,671.7 579.4,678.1 579.4,694.1" fill="none" stroke="#f8d800" stroke-width="0.9"/>
<polyline points="557.3,674.3 559.9,681.3 571.6,682.3 579.4,678.1" fill="none" stroke="#f8d800" stroke-width="0.9"/>
<path d="M559.9 681.3 V696.4 M571.6 682.3 V698.3" stroke="#f8d800" stroke-width="0.9"/>
<ellipse cx="568.5" cy="675.7" rx="4.7" ry="2.8" fill="url(#boltg)"/>
<ellipse cx="567.9" cy="674.1" rx="4.1" ry="1.6" fill="#d8b000"/>
<g transform="translate(620.5 622) rotate(29)"><path d="M-26 -23 A26 13.5 0 0 1 26 -23 V23 A26 13.5 0 0 1 -26 23 Z" fill="url(#hatch)"/><path d="M-26 -23 A26 13.5 0 0 1 26 -23 V23 A26 13.5 0 0 1 -26 23 Z" fill="url(#tubeg)"/><ellipse cx="0" cy="-23" rx="26" ry="13.5" fill="none" stroke="#b04a08" stroke-width="1" opacity="0.6"/></g>
<path d="M633.4 576.4 L625.8 581.2 L644.7 610.4 L652.3 605.6 Z" fill="#bb0000" stroke="#ff1010" stroke-width="1"/>
<path d="M623.6 596.9 L627.6 604.9 L655.8 590.8 L651.8 582.8 Z" fill="#c00000" stroke="#ff1010" stroke-width="1"/>
<path d="M632 604.3 L644.5 598" stroke="#400000" stroke-width="1.3"/>
<path d="M515.8 783.5 V792.5 A20.7 8.5 0 0 0 557.2 792.5 V783.5 Z" fill="url(#washg)"/>
<ellipse cx="536.5" cy="783.5" rx="20.7" ry="8.5" fill="#c09c00"/>
<polygon points="517.8,754.7 522.1,766.4 522.1,791.5 517.8,787.5" fill="#c4a000"/>
<polygon points="522.1,766.4 541.7,768.0 541.7,794.7 522.1,791.5" fill="#a88a00"/>
<polygon points="541.7,768.0 554.6,761.0 554.6,787.6 541.7,794.7" fill="#685400"/>
<polygon points="517.8,754.7 533.9,746.8 551.1,750.4 554.6,761.0 541.7,768.0 522.1,766.4" fill="#d8b000"/>
<polyline points="517.8,787.5 517.8,754.7 533.9,746.8 551.1,750.4 554.6,761.0 554.6,787.6" fill="none" stroke="#f8d800" stroke-width="0.9"/>
<polyline points="517.8,754.7 522.1,766.4 541.7,768.0 554.6,761.0" fill="none" stroke="#f8d800" stroke-width="0.9"/>
<path d="M522.1 766.4 V791.5 M541.7 768.0 V794.7" stroke="#f8d800" stroke-width="0.9"/>
<ellipse cx="536.5" cy="757.0" rx="7.8" ry="4.6" fill="url(#boltg)"/>
<ellipse cx="535.5" cy="754.3" rx="6.8" ry="2.6" fill="#d8b000"/>
<rect x="532.8" y="279" width="8.2" height="66" rx="3" fill="url(#shaft)"/>
<ellipse cx="537.4" cy="345.5" rx="9.8" ry="3.5" fill="#9a9a9a"/>
<path d="M527.6 345.5 L547.2 345.5 L537.5 367.7 Z" fill="url(#cone)"/>
<path d="M702 503.7 L675.5 542.5" stroke="url(#shaft2)" stroke-width="5" stroke-linecap="round"/>
<ellipse cx="676" cy="541" rx="9.5" ry="8" fill="#9e9e9e"/>
<path d="M666 534 L684.5 549 L665.2 556.7 Z" fill="#6e6e6e"/>
<path d="M702 503.7 L678.5 538.5" stroke="#b8b8b8" stroke-width="2.6" stroke-linecap="round"/>
<path d="M527.5 416.3 L572.5 393.3 L585.8 401.7 L525.8 432.5 L532.5 437 L507 437.5 L509.6 430.4 L499.2 399.2 Z" fill="#cdcdcd" stroke="#f6f6f6" stroke-width="1"/>
<path d="M507 404 C515 385 530 373 545 374 C558 375 568 385 573.5 402 L561.5 397 C557 388 552 383 548 383 C535 384 526 396 521.7 411.7 Z" fill="url(#archg)" stroke="#f6f6f6" stroke-width="1"/>
<path d="M558.3 383.75 C566 389 571 395 573.3 404 L561.7 397 Z" fill="#8c8c8c"/>
<path d="M499.2 399.2 L527.5 416.3 L509.6 430.4 Z" fill="#dedede" stroke="#f6f6f6" stroke-width="1"/>
<rect x="536" y="244" width="32.8" height="18.6" fill="#b4b4b4"/>
<rect x="561.2" y="366" width="32.4" height="18.8" fill="#b4b4b4"/>
<rect x="482.4" y="427" width="24.6" height="18.5" fill="#b4b4b4"/>
<rect x="708.8" y="474.8" width="25.2" height="19.1" fill="#b4b4b4"/>
</svg>
<svg style="left:0;top:0" width="1920" height="1020" viewBox="0 0 1920 1020">
<g fill="none" stroke="#fff" stroke-width="2.1" stroke-linejoin="miter">
 <path d="M25.5 216.8 L35.8 206.6 L46.4 216.8 M27.3 215.3 V227 H33.5 V220.2 H38.6 V227 H44.8 V215.3"/>
 <rect x="70.6" y="206" width="16" height="14.8" stroke-width="1.3"/>
 <circle cx="85.8" cy="220.2" r="5.3" stroke-width="1.6" fill="#999"/>
 <path d="M85.8 216.8 V220.6 H82.6" stroke-width="1.1"/>
 <path d="M89.6 224 L93.8 228" stroke-width="2"/>
 <circle cx="125.8" cy="215.6" r="8.6" stroke-width="2.9"/>
 <path d="M132.3 222.3 L138.6 228.6" stroke-width="3.4"/>
 <path d="M173.2 207 V227.2 M162.8 216.8 H183.2" stroke-width="2.2"/>
 <path d="M225.5 211 A8.6 8.6 0 1 0 227.3 219.5" stroke-width="2.3"/>
</g>
<g fill="#fff">
 <path d="M168.7 209.8 L173.2 204.4 L177.7 209.8 Z M168.7 223.8 L173.2 229.7 L177.7 223.8 Z M166 212.3 L160.3 216.8 L166 221.3 Z M180.4 212.3 L185.7 216.8 L180.4 221.3 Z"/>
 <path d="M229.2 207.6 L229.4 216.8 L220.6 216.6 Z"/>
</g>
<g fill="none" stroke="#fff" stroke-width="1.7">
 <path d="M251 205.8 L257.5 212.3 M251 205.8 V210.8 M251 205.8 H256"/>
 <path d="M273.3 205.8 L266.8 212.3 M273.3 205.8 V210.8 M273.3 205.8 H268.3"/>
 <path d="M251 228.2 L257.5 221.7 M251 228.2 V223.2 M251 228.2 H256"/>
 <path d="M273.3 228.2 L266.8 221.7 M273.3 228.2 V223.2 M273.3 228.2 H268.3"/>
</g>
<path d="M295 213.3 L318 209.6 L319.5 212 V217.7 L302.5 226.8 L295 222 Z" fill="#fff"/>
<path d="M295 213.3 L302.5 216.2 L319.5 211.6 M302.5 216.2 V226.8" fill="none" stroke="#999" stroke-width="0.8"/>

<g>
 <ellipse cx="1159.3" cy="333.3" rx="45" ry="23" fill="none" stroke="#dcdcdc" stroke-width="11.5"/>
 <path d="M1121.6 339.8 L1108 347.3 M1108 347.3 L1112.5 346.8 M1108 347.3 L1110.5 343.5 M1190.6 342 L1203.5 350.6 M1203.5 350.6 L1199 350.5 M1203.5 350.6 L1201.5 346.5" stroke="#9a9a9a" stroke-width="1" fill="none"/>
 <path d="M1159.8 270.8 L1194.9 284.8 L1190.6 324.7 L1157.1 346.8 L1128 323.6 L1123.2 284.3 Z" fill="#b0b0b0"/>
 <path d="M1159.8 270.8 L1123.2 284.3 L1158.8 302 L1194.9 284.8 Z" fill="#b9b9b9"/>
 <path d="M1128 323.6 L1159.8 307.4 L1190.6 324.7 L1157.1 346.8 Z" fill="#a9a9a9"/>
 <g fill="none" stroke="#7a7a7a" stroke-width="1">
  <path d="M1159.8 270.8 L1194.9 284.8 L1190.6 324.7 L1157.1 346.8 L1128 323.6 L1123.2 284.3 Z"/>
  <path d="M1123.2 284.3 L1158.8 302 L1194.9 284.8 M1158.8 302 L1157.1 346.8 M1159.8 270.8 V307.4 M1128 323.6 L1159.8 307.4 L1190.6 324.7"/>
 </g>
 <path d="M1152 285 L1156 284 L1158 286.5 L1161.5 285" stroke="#fff" stroke-width="1.1" fill="none"/>
 <path d="M1139.5 314 L1143 320 M1143 313.5 L1140 320.5" stroke="#fff" stroke-width="1.1"/>
 <path d="M1176.5 313 L1178.5 316.5 M1180.5 311.5 L1174.5 320" stroke="#fff" stroke-width="1.1"/>
 <path d="M1193 303.7 H1197.5" stroke="#9a9a9a" stroke-width="1"/>
</g>
<rect x="1199" y="785" width="13" height="150" fill="#f2f2f2"/>
<rect x="1200" y="381.3" width="11" height="404" rx="2.5" fill="#d2d2d2"/>
<path d="M1009.8 399.0 H1017.2 V391.6 Z" fill="#404040"/>
<path d="M1009.8 483.0 H1017.2 V475.6 Z" fill="#404040"/>
<path d="M1009.8 539.0 H1017.2 V531.6 Z" fill="#404040"/>
<rect x="1019.8" y="403.9" width="178" height="37" rx="7" fill="#fff" stroke="#ff0000" stroke-width="3.8"/>
<path d="M1025 409 H1175 L1193.4 422.3 L1175 435.7 H1025 Z" fill="#f07024"/>
<rect x="1037.1" y="415.40" width="13.9" height="13.25" rx="2.2" fill="#e4e4e4"/>
<path d="M1040.7 422.35 L1044.4 426.55 L1053.2 414.05" fill="none" stroke="#a0a0a0" stroke-width="3"/>
<rect x="1037.1" y="443.55" width="13.9" height="13.25" rx="2.2" fill="#e4e4e4"/>
<path d="M1040.7 450.50 L1044.4 454.70 L1053.2 442.20" fill="none" stroke="#a0a0a0" stroke-width="3"/>
<rect x="1037.1" y="499.65" width="13.9" height="13.25" rx="2.2" fill="#e4e4e4"/>
<path d="M1040.7 506.60 L1044.4 510.80 L1053.2 498.30" fill="none" stroke="#ff8c00" stroke-width="3"/>
<rect x="1037.1" y="555.55" width="13.9" height="13.25" rx="2.2" fill="#e4e4e4"/>
<path d="M1040.7 562.50 L1044.4 566.70 L1053.2 554.20" fill="none" stroke="#ff8c00" stroke-width="3"/>
<rect x="1037.1" y="583.55" width="13.9" height="13.25" rx="2.2" fill="#e4e4e4"/>
<path d="M1040.7 590.50 L1044.4 594.70 L1053.2 582.20" fill="none" stroke="#ff8c00" stroke-width="3"/>
<rect x="1037.1" y="611.55" width="13.9" height="13.25" rx="2.2" fill="#e4e4e4"/>
<path d="M1040.7 618.50 L1044.4 622.70 L1053.2 610.20" fill="none" stroke="#ff8c00" stroke-width="3"/>
<rect x="1037.1" y="639.55" width="13.9" height="13.25" rx="2.2" fill="#e4e4e4"/>
<path d="M1040.7 646.50 L1044.4 650.70 L1053.2 638.20" fill="none" stroke="#ff8c00" stroke-width="3"/>
<rect x="1037.1" y="667.55" width="13.9" height="13.25" rx="2.2" fill="#e4e4e4"/>
<path d="M1040.7 674.50 L1044.4 678.70 L1053.2 666.20" fill="none" stroke="#ff8c00" stroke-width="3"/>
<rect x="1037.1" y="695.55" width="13.9" height="13.25" rx="2.2" fill="#e4e4e4"/>
<path d="M1040.7 702.50 L1044.4 706.70 L1053.2 694.20" fill="none" stroke="#ff8c00" stroke-width="3"/>
<rect x="1037.1" y="723.55" width="13.9" height="13.25" rx="2.2" fill="#e4e4e4"/>
<path d="M1040.7 730.50 L1044.4 734.70 L1053.2 722.20" fill="none" stroke="#ff8c00" stroke-width="3"/>
<rect x="1037.1" y="751.55" width="13.9" height="13.25" rx="2.2" fill="#e4e4e4"/>
<path d="M1040.7 758.50 L1044.4 762.70 L1053.2 750.20" fill="none" stroke="#ff8c00" stroke-width="3"/>
<rect x="1037.1" y="779.55" width="13.9" height="13.25" rx="2.2" fill="#e4e4e4"/>
<path d="M1040.7 786.50 L1044.4 790.70 L1053.2 778.20" fill="none" stroke="#ff8c00" stroke-width="3"/>
<rect x="1037.1" y="807.55" width="13.9" height="13.25" rx="2.2" fill="#e4e4e4"/>
<path d="M1040.7 814.50 L1044.4 818.70 L1053.2 806.20" fill="none" stroke="#ff8c00" stroke-width="3"/>
<rect x="1037.1" y="835.55" width="13.9" height="13.25" rx="2.2" fill="#e4e4e4"/>
<path d="M1040.7 842.50 L1044.4 846.70 L1053.2 834.20" fill="none" stroke="#ff8c00" stroke-width="3"/>
<rect x="1037.1" y="863.55" width="13.9" height="13.25" rx="2.2" fill="#e4e4e4"/>
<path d="M1040.7 870.50 L1044.4 874.70 L1053.2 862.20" fill="none" stroke="#ff8c00" stroke-width="3"/>
<rect x="1037.1" y="891.55" width="13.9" height="13.25" rx="2.2" fill="#e4e4e4"/>
<path d="M1040.7 898.50 L1044.4 902.70 L1053.2 890.20" fill="none" stroke="#ff8c00" stroke-width="3"/>
<rect x="1037.1" y="919.55" width="13.9" height="13.25" rx="2.2" fill="#e4e4e4"/>
<path d="M1040.7 926.50 L1044.4 930.70 L1053.2 918.20" fill="none" stroke="#ff8c00" stroke-width="3"/>
</svg>
<svg style="left:0;top:0" width="1920" height="1020" viewBox="0 0 1920 1020">
<path d="M1262.5 258.3 H1274.7 L1268.6 266.6 Z" fill="#f07024"/>
<path d="M1262.5 412.0 H1274.7 L1268.6 420.3 Z" fill="#f07024"/>
<path d="M1262.5 719.5 H1274.7 L1268.6 727.8 Z" fill="#f07024"/>
<rect x="1417" y="283.3" width="455" height="27.4" fill="#f2f2f2"/>
<path d="M1857 293.9 H1866 L1861.5 300 Z" fill="#e2e2e2"/>
<rect x="1876" y="283.3" width="28" height="27.4" fill="#bfbfbf"/>
<path d="M1887.6 287 H1892.4 V294.7 H1900 V299.4 H1892.4 V307 H1887.6 V299.4 H1880 V294.7 H1887.6 Z" fill="#fff"/>
<rect x="1423" y="319" width="14.3" height="13" rx="2" fill="#e6e6e6"/>
<rect x="1423" y="346.7" width="14.3" height="13.2" rx="2" fill="#e6e6e6"/>
<rect x="1417" y="369.5" width="487" height="27.1" fill="#f2f2f2"/>
<rect x="1416" y="437.2" width="488" height="27" fill="#f0f0f0"/>
<rect x="1416" y="467.5" width="488" height="27" fill="#f0f0f0"/>
<rect x="1416" y="497.4" width="488" height="27" fill="#f0f0f0"/>
<rect x="1416" y="527.3" width="488" height="27" fill="#f0f0f0"/>
<rect x="1416" y="557.3" width="488" height="27" fill="#f0f0f0"/>
<rect x="1416" y="587.3" width="488" height="27" fill="#f0f0f0"/>
<rect x="1416" y="617.3" width="488" height="27" fill="#f0f0f0"/>
<rect x="1416" y="647.3" width="488" height="27" fill="#f0f0f0"/>
<rect x="1416" y="677.5" width="488" height="27" fill="#f0f0f0"/>
<path d="M1888.8 380.0 H1897.6 L1893.2 385.9 Z" fill="#e0e0e0"/>
<path d="M1888.8 537.8 H1897.6 L1893.2 543.7 Z" fill="#e0e0e0"/>
<path d="M1888.8 688.0 H1897.6 L1893.2 693.9 Z" fill="#e0e0e0"/>
<rect x="1283" y="745" width="127.6" height="27.7" fill="#f07024"/>
<rect x="1417" y="745" width="487" height="28.5" fill="#e5e5e5"/>
<path d="M1888.7 755.6 H1898 L1893.35 762.8 Z" fill="#111"/>
<rect x="1417.5" y="773.5" width="486" height="89" fill="#e6e6e6" stroke="#7a7a7a" stroke-width="1"/>
<rect x="1417.7" y="839.7" width="485.3" height="22.1" fill="#a9a9a9"/>
<rect x="1420.5" y="842.3" width="480" height="16" fill="none" stroke="#222" stroke-width="1" stroke-dasharray="1 2"/>
</svg>
<div class="t" style="left:988.0px;top:13.2px;font-size:19px;color:#f0f0f0;font-weight:normal;transform:scaleX(0.923);">Conn-1</div>
<div class="t" style="left:107.5px;top:9.4px;font-size:25px;color:#ffffff;font-weight:bold;font-style:italic;transform:scaleX(1.016);">StatiCa</div>
<div class="t" style="left:197.5px;top:12.4px;font-size:9px;color:#ffffff;font-weight:normal;transform:scaleX(1.205);">®</div>
<div class="t" style="left:19.4px;top:43.8px;font-size:12px;color:#ffffff;font-weight:normal;font-style:italic;transform:scaleX(1.013);">Calculate yesterday's estimates</div>
<div class="t" style="left:228.9px;top:10.8px;font-size:21px;color:#ffffff;font-weight:bold;font-style:italic;transform:scaleX(0.978);">CONNECTION</div>
<div class="t" style="left:308.5px;top:51.5px;font-size:15px;color:#ffffff;font-weight:bold;transform:scaleX(0.950);">Project</div>
<div class="t" style="left:439.4px;top:51.5px;font-size:15px;color:#ffffff;font-weight:bold;transform:scaleX(0.940);">Design</div>
<div class="t" style="left:571.2px;top:51.5px;font-size:15px;color:#ffffff;font-weight:bold;transform:scaleX(0.899);">Check</div>
<div class="t" style="left:697.0px;top:51.5px;font-size:15px;color:#ffffff;font-weight:bold;transform:scaleX(0.983);">Report</div>
<div class="t" style="left:817.5px;top:51.5px;font-size:15px;color:#ffffff;font-weight:bold;transform:scaleX(0.988);">Materials</div>
<div class="t" style="left:203.9px;top:132.6px;font-size:15.5px;color:#333;font-weight:normal;transform:scaleX(0.919);">New</div>
<div class="t" style="left:249.4px;top:132.6px;font-size:15.5px;color:#333;font-weight:normal;transform:scaleX(0.928);">Copy</div>
<div class="t" style="left:396.5px;top:132.6px;font-size:15.5px;color:#333;font-weight:normal;transform:scaleX(0.946);">Members</div>
<div class="t" style="left:467.6px;top:132.6px;font-size:15.5px;color:#333;font-weight:normal;transform:scaleX(0.889);">Plates</div>
<div class="t" style="left:523.5px;top:132.6px;font-size:15.5px;color:#333;font-weight:normal;transform:scaleX(0.723);">LCS</div>
<div class="t" style="left:581.8px;top:132.6px;font-size:15.5px;color:#333;font-weight:normal;transform:scaleX(0.929);">New</div>
<div class="t" style="left:624.5px;top:132.6px;font-size:15.5px;color:#333;font-weight:normal;transform:scaleX(0.914);">Gallery</div>
<div class="t" style="left:691.8px;top:132.6px;font-size:15.5px;color:#333;font-weight:normal;transform:scaleX(0.904);">Propose</div>
<div class="t" style="left:753.5px;top:132.6px;font-size:15.5px;color:#333;font-weight:normal;transform:scaleX(0.903);">Publish</div>
<div class="t" style="left:808.8px;top:132.6px;font-size:15.5px;color:#333;font-weight:normal;transform:scaleX(0.935);">Manage</div>
<div class="t" style="left:883.5px;top:132.6px;font-size:15.5px;color:#a9a9a9;font-weight:normal;transform:scaleX(0.988);">Apply</div>
<div class="t" style="left:930.6px;top:132.6px;font-size:15.5px;color:#a9a9a9;font-weight:normal;transform:scaleX(0.898);">Create</div>
<div class="t" style="left:981.8px;top:132.6px;font-size:15.5px;color:#333;font-weight:normal;transform:scaleX(0.951);">Manager</div>
<div class="t" style="left:1065.3px;top:132.6px;font-size:15.5px;color:#333;font-weight:normal;transform:scaleX(0.920);">Code</div>
<div class="t" style="left:1064.5px;top:149.2px;font-size:15.5px;color:#333;font-weight:normal;transform:scaleX(0.910);">setup</div>
<div class="t" style="left:1110.6px;top:132.6px;font-size:15.5px;color:#333;font-weight:normal;transform:scaleX(0.928);">Calculate</div>
<div class="t" style="left:1179.8px;top:132.6px;font-size:15.5px;color:#a9a9a9;font-weight:normal;transform:scaleX(0.927);">Overall</div>
<div class="t" style="left:1184.7px;top:149.2px;font-size:15.5px;color:#a9a9a9;font-weight:normal;transform:scaleX(0.896);">check</div>
<div class="t" style="left:1247.6px;top:132.6px;font-size:15.5px;color:#333;font-weight:normal;transform:scaleX(0.944);">Settings</div>
<div class="t" style="left:1319.4px;top:132.6px;font-size:15.5px;color:#333;font-weight:normal;transform:scaleX(0.923);">Loads in</div>
<div class="t" style="left:1308.2px;top:149.2px;font-size:15.5px;color:#333;font-weight:normal;">equilibrium</div>
<div class="t" style="left:1405.3px;top:132.6px;font-size:15.5px;color:#333;font-weight:normal;transform:scaleX(0.923);">Loads -</div>
<div class="t" style="left:1393.0px;top:149.2px;font-size:15.5px;color:#333;font-weight:normal;transform:scaleX(0.948);">percentage</div>
<div class="t" style="left:1499.4px;top:132.6px;font-size:15.5px;color:#333;font-weight:normal;transform:scaleX(0.785);">XLS</div>
<div class="t" style="left:1488.8px;top:149.2px;font-size:15.5px;color:#333;font-weight:normal;transform:scaleX(1.006);">Import</div>
<div class="t" style="left:1541.5px;top:132.6px;font-size:15.5px;color:#333;font-weight:normal;transform:scaleX(0.944);">Connection</div>
<div class="t" style="left:1556.5px;top:149.2px;font-size:15.5px;color:#333;font-weight:normal;transform:scaleX(1.008);">Import</div>
<div class="t" style="left:1634.0px;top:132.6px;font-size:15.5px;color:#333;font-weight:normal;transform:scaleX(0.785);">XLS</div>
<div class="t" style="left:1625.0px;top:149.2px;font-size:15.5px;color:#333;font-weight:normal;transform:scaleX(0.926);">Export</div>
<div class="t" style="left:1689.5px;top:132.6px;font-size:15.5px;color:#a9a9a9;font-weight:normal;transform:scaleX(0.969);">Member</div>
<div class="t" style="left:1757.5px;top:132.6px;font-size:15.5px;color:#333;font-weight:normal;transform:scaleX(0.922);">Load</div>
<div class="t" style="left:1801.5px;top:132.6px;font-size:15.5px;color:#333;font-weight:normal;transform:scaleX(0.975);">Operation</div>
<div class="t" style="left:328.0px;top:176.6px;font-size:14.5px;color:#a6a6a6;font-weight:normal;transform:scaleX(0.979);">Data</div>
<div class="t" style="left:454.7px;top:176.6px;font-size:14.5px;color:#a6a6a6;font-weight:normal;transform:scaleX(0.964);">Labels</div>
<div class="t" style="left:597.6px;top:176.6px;font-size:14.5px;color:#a6a6a6;font-weight:normal;transform:scaleX(0.954);">Pictures</div>
<div class="t" style="left:799.4px;top:176.6px;font-size:14.5px;color:#a6a6a6;font-weight:normal;">Connection Browser</div>
<div class="t" style="left:1121.8px;top:176.6px;font-size:14.5px;color:#a6a6a6;font-weight:normal;transform:scaleX(0.881);">CBFEM</div>
<div class="t" style="left:1331.8px;top:176.6px;font-size:14.5px;color:#a6a6a6;font-weight:normal;transform:scaleX(1.012);">Options</div>
<div class="t" style="left:1510.6px;top:176.6px;font-size:14.5px;color:#a6a6a6;font-weight:normal;transform:scaleX(1.057);">Import/Export loads</div>
<div class="t" style="left:1763.6px;top:176.6px;font-size:14.5px;color:#a6a6a6;font-weight:normal;">New</div>
<div class="t" style="left:103.5px;top:176.6px;font-size:14.5px;color:#f7b089;font-weight:bold;">Project items</div>
<div class="t" style="left:16.5px;top:98.0px;font-size:15px;color:#ffffff;font-weight:normal;transform:scaleX(0.962);">846 - 796</div>
<div class="t" style="left:16.7px;top:133.2px;font-size:15px;color:#f07024;font-weight:bold;transform:scaleX(0.816);">EPS</div>
<div class="t" style="left:56.5px;top:133.2px;font-size:15px;color:#222;font-weight:normal;transform:scaleX(0.798);">ST</div>
<div class="t" style="left:88.2px;top:133.2px;font-size:15px;color:#222;font-weight:normal;transform:scaleX(0.867);">CD</div>
<div class="t" style="left:123.5px;top:133.2px;font-size:15px;color:#222;font-weight:normal;transform:scaleX(0.900);">DR</div>
<div class="t" style="left:158.2px;top:133.2px;font-size:15px;color:#222;font-weight:normal;transform:scaleX(0.849);">FAT</div>
<div class="t" style="left:337.6px;top:94.0px;font-size:15px;color:#222;font-weight:normal;transform:scaleX(0.970);">Undo</div>
<div class="t" style="left:337.6px;top:121.9px;font-size:15px;color:#aaaaaa;font-weight:normal;transform:scaleX(0.937);">Redo</div>
<div class="t" style="left:337.6px;top:149.7px;font-size:15px;color:#222;font-weight:normal;transform:scaleX(0.860);">Save</div>
<div class="t" style="left:994.0px;top:209.2px;font-size:15px;color:#ffffff;font-weight:bold;transform:scaleX(0.914);">Solid</div>
<div class="t" style="left:1044.7px;top:209.2px;font-size:15px;color:#ffffff;font-weight:normal;transform:scaleX(0.941);">Transparent</div>
<div class="t" style="left:1143.0px;top:209.2px;font-size:15px;color:#ffffff;font-weight:normal;">Wireframe</div>
<div class="t" style="left:539.5px;top:246.7px;font-size:13.5px;color:#111;font-weight:normal;transform:scaleX(0.985);">20.2</div>
<div class="t" style="left:564.8px;top:368.8px;font-size:13.5px;color:#111;font-weight:normal;transform:scaleX(0.970);">12.2</div>
<div class="t" style="left:485.5px;top:429.5px;font-size:13.5px;color:#111;font-weight:normal;transform:scaleX(0.985);">1.9</div>
<div class="t" style="left:711.3px;top:478.0px;font-size:13.5px;color:#111;font-weight:normal;transform:scaleX(1.065);">0.9</div>
<div class="t" style="left:914.0px;top:259.4px;font-size:15px;color:#f07024;font-weight:bold;transform:scaleX(0.967);">Production cost</div>
<div class="t" style="left:1032.0px;top:259.4px;font-size:15px;color:#222;font-weight:normal;transform:scaleX(0.900);">-</div>
<div class="t" style="left:1043.8px;top:259.4px;font-size:15px;color:#111;font-weight:bold;transform:scaleX(0.942);">30 €</div>
<div class="t" style="left:1038.0px;top:387.9px;font-size:15px;color:#444444;font-weight:bold;transform:scaleX(1.078);">Members</div>
<div class="t" style="left:1072.0px;top:415.9px;font-size:15px;color:#ffffff;font-weight:normal;transform:scaleX(1.066);text-decoration:underline;text-underline-offset:2px;">Member 1</div>
<div class="t" style="left:1072.0px;top:443.9px;font-size:15px;color:#444444;font-weight:normal;transform:scaleX(1.100);-webkit-text-stroke:0.35px #444;">Member 2</div>
<div class="t" style="left:1037.9px;top:471.9px;font-size:15px;color:#444444;font-weight:bold;transform:scaleX(1.031);">Load effects</div>
<div class="t" style="left:1072.0px;top:499.9px;font-size:15px;color:#444444;font-weight:normal;transform:scaleX(0.801);-webkit-text-stroke:0.35px #444;">LE1</div>
<div class="t" style="left:1038.0px;top:527.9px;font-size:15px;color:#444444;font-weight:bold;transform:scaleX(1.046);">Operations</div>
<div class="t" style="left:1072.0px;top:555.9px;font-size:15px;color:#444444;font-weight:normal;transform:scaleX(1.067);-webkit-text-stroke:0.35px #444;">Work plane 1</div>
<div class="t" style="left:1072.0px;top:583.9px;font-size:15px;color:#444444;font-weight:normal;transform:scaleX(0.976);-webkit-text-stroke:0.35px #444;">Cut 1</div>
<div class="t" style="left:1072.0px;top:611.9px;font-size:15px;color:#444444;font-weight:normal;transform:scaleX(1.090);-webkit-text-stroke:0.35px #444;">Work plane 2</div>
<div class="t" style="left:1072.0px;top:639.9px;font-size:15px;color:#444444;font-weight:normal;transform:scaleX(1.032);-webkit-text-stroke:0.35px #444;">Cut 2</div>
<div class="t" style="left:1072.0px;top:667.9px;font-size:15px;color:#444444;font-weight:normal;transform:scaleX(1.090);-webkit-text-stroke:0.35px #444;">Work plane 3</div>
<div class="t" style="left:1072.0px;top:695.9px;font-size:15px;color:#444444;font-weight:normal;transform:scaleX(1.029);-webkit-text-stroke:0.35px #444;">Cut 3</div>
<div class="t" style="left:1071.6px;top:723.9px;font-size:15px;color:#444444;font-weight:normal;-webkit-text-stroke:0.35px #444;">Plate 1</div>
<div class="t" style="left:1071.6px;top:751.9px;font-size:15px;color:#444444;font-weight:normal;transform:scaleX(1.041);-webkit-text-stroke:0.35px #444;">Plate 2</div>
<div class="t" style="left:1071.6px;top:779.9px;font-size:15px;color:#444444;font-weight:normal;transform:scaleX(1.041);-webkit-text-stroke:0.35px #444;">Plate 3</div>
<div class="t" style="left:1071.6px;top:807.9px;font-size:15px;color:#444444;font-weight:normal;transform:scaleX(1.053);-webkit-text-stroke:0.35px #444;">Plate 4</div>
<div class="t" style="left:1071.6px;top:835.9px;font-size:15px;color:#444444;font-weight:normal;transform:scaleX(1.041);-webkit-text-stroke:0.35px #444;">Plate 5</div>
<div class="t" style="left:1071.6px;top:863.9px;font-size:15px;color:#444444;font-weight:normal;transform:scaleX(1.023);-webkit-text-stroke:0.35px #444;">Bolts 1</div>
<div class="t" style="left:1071.6px;top:891.9px;font-size:15px;color:#444444;font-weight:normal;transform:scaleX(1.053);-webkit-text-stroke:0.35px #444;">Anchors 1</div>
<div class="t" style="left:1071.6px;top:919.9px;font-size:15px;color:#444444;font-weight:normal;transform:scaleX(1.047);-webkit-text-stroke:0.35px #444;">Weld 1</div>
<div class="t" style="left:1253.8px;top:209.9px;font-size:15px;color:#ffffff;font-weight:bold;transform:scaleX(0.992);">Member 1</div>
<div class="t" style="left:1337.5px;top:209.9px;font-size:15px;color:#ffffff;font-weight:normal;">[Bearing member]</div>
<div class="t" style="left:1813.8px;top:209.9px;font-size:15px;color:#ffffff;font-weight:bold;transform:scaleX(0.933);">Copy</div>
<div class="t" style="left:1862.3px;top:209.9px;font-size:15px;color:#ffffff;font-weight:bold;transform:scaleX(0.988);">Delete</div>
<div class="t" style="left:1295.5px;top:253.8px;font-size:19px;color:#f07024;font-weight:bold;transform:scaleX(0.929);">Properties</div>
<div class="t" style="left:1295.5px;top:407.9px;font-size:19px;color:#f07024;font-weight:bold;transform:scaleX(0.893);">Position</div>
<div class="t" style="left:1295.5px;top:716.6px;font-size:19px;color:#f07024;font-weight:bold;transform:scaleX(0.967);">Model</div>
<div class="t" style="left:1295.5px;top:290.9px;font-size:15px;color:#6e6e6e;font-weight:normal;transform:scaleX(0.972);">Cross-section</div>
<div class="t" style="left:1295.5px;top:320.4px;font-size:15px;color:#6e6e6e;font-weight:normal;transform:scaleX(1.081);">Mirror Y</div>
<div class="t" style="left:1295.5px;top:347.9px;font-size:15px;color:#6e6e6e;font-weight:normal;transform:scaleX(1.092);">Mirror Z</div>
<div class="t" style="left:1295.5px;top:377.2px;font-size:15px;color:#6e6e6e;font-weight:normal;transform:scaleX(1.015);">Geometrical type</div>
<div class="t" style="left:1295.5px;top:445.1px;font-size:15px;color:#6e6e6e;font-weight:normal;transform:scaleX(0.992);">Axis X [m]</div>
<div class="t" style="left:1295.5px;top:475.1px;font-size:15px;color:#6e6e6e;font-weight:normal;">Axis Y [m]</div>
<div class="t" style="left:1295.5px;top:505.0px;font-size:15px;color:#6e6e6e;font-weight:normal;">Axis Z [m]</div>
<div class="t" style="left:1295.5px;top:535.0px;font-size:15px;color:#6e6e6e;font-weight:normal;transform:scaleX(1.012);">Connected by</div>
<div class="t" style="left:1295.5px;top:565.0px;font-size:15px;color:#6e6e6e;font-weight:normal;transform:scaleX(1.035);">α - Rotation [°]</div>
<div class="t" style="left:1295.5px;top:595.0px;font-size:15px;color:#6e6e6e;font-weight:normal;transform:scaleX(1.011);">Offset ex [mm]</div>
<div class="t" style="left:1295.5px;top:625.0px;font-size:15px;color:#6e6e6e;font-weight:normal;transform:scaleX(1.011);">Offset ey [mm]</div>
<div class="t" style="left:1295.5px;top:655.0px;font-size:15px;color:#6e6e6e;font-weight:normal;">Offset ez [mm]</div>
<div class="t" style="left:1295.5px;top:685.0px;font-size:15px;color:#6e6e6e;font-weight:normal;transform:scaleX(1.046);">Align</div>
<div class="t" style="left:1425.9px;top:290.9px;font-size:15px;color:#111;font-weight:normal;transform:scaleX(0.919);">1 - RO48.3X3.2</div>
<div class="t" style="left:1425.9px;top:377.2px;font-size:15px;color:#111;font-weight:normal;transform:scaleX(0.936);">Ended</div>
<div class="t" style="left:1422.0px;top:445.1px;font-size:15px;color:#9a9a9a;font-weight:normal;transform:scaleX(0.975);">0.00 -0.53 -0.85</div>
<div class="t" style="left:1422.0px;top:475.1px;font-size:15px;color:#9a9a9a;font-weight:normal;transform:scaleX(0.932);">1.00 0.00 0.00</div>
<div class="t" style="left:1422.0px;top:505.0px;font-size:15px;color:#9a9a9a;font-weight:normal;transform:scaleX(0.963);">0.00 -0.85 0.53</div>
<div class="t" style="left:1425.9px;top:535.0px;font-size:15px;color:#111;font-weight:normal;transform:scaleX(0.893);">End</div>
<div class="t" style="left:1422.0px;top:565.0px;font-size:15px;color:#9a9a9a;font-weight:normal;transform:scaleX(0.955);">0.0</div>
<div class="t" style="left:1422.0px;top:595.0px;font-size:15px;color:#9a9a9a;font-weight:normal;transform:scaleX(0.978);">0</div>
<div class="t" style="left:1422.0px;top:625.0px;font-size:15px;color:#9a9a9a;font-weight:normal;transform:scaleX(0.978);">0</div>
<div class="t" style="left:1422.0px;top:655.0px;font-size:15px;color:#9a9a9a;font-weight:normal;transform:scaleX(0.978);">0</div>
<div class="t" style="left:1425.9px;top:685.0px;font-size:15px;color:#111;font-weight:normal;transform:scaleX(0.975);">In node</div>
<div class="t" style="left:1295.5px;top:752.9px;font-size:15px;color:#ffffff;font-weight:normal;transform:scaleX(1.054);">Model type</div>
<div class="t" style="left:1424.8px;top:752.9px;font-size:15px;color:#111;font-weight:normal;">N-Vy-Vz</div>
<div class="t" style="left:1295.5px;top:782.6px;font-size:15px;color:#111;font-weight:normal;transform:scaleX(0.970);">Forces in</div>
<div class="t" style="left:1295.5px;top:812.8px;font-size:15px;color:#111;font-weight:normal;">X [mm]</div>
<div class="t" style="left:1423.0px;top:778.5px;font-size:15px;color:#111;font-weight:normal;transform:scaleX(1.020);">N-Vy-Vz-Mx-My-Mz</div>
<div class="t" style="left:1423.0px;top:800.5px;font-size:15px;color:#111;font-weight:normal;transform:scaleX(1.008);">N-Vz-My</div>
<div class="t" style="left:1423.0px;top:822.2px;font-size:15px;color:#111;font-weight:normal;transform:scaleX(1.018);">N-Vy-Mz</div>
<div class="t" style="left:1423.0px;top:843.6px;font-size:15px;color:#111;font-weight:normal;">N-Vy-Vz</div>
<div class="t" style="left:1253.1px;top:876.2px;font-size:14.5px;color:#555555;font-weight:normal;transform:scaleX(1.030);">One member of the joint is considered as 'bearing'. The other</div>
<div class="t" style="left:1253.1px;top:896.0px;font-size:14.5px;color:#555555;font-weight:normal;transform:scaleX(1.023);">ones are 'connected'. The support in analysis model is applied on</div>
<div class="t" style="left:1253.1px;top:915.9px;font-size:14.5px;color:#555555;font-weight:normal;transform:scaleX(1.045);">the bearing member.</div>
<div class="t" style="left:1766.1px;top:993.4px;font-size:15px;color:#f07024;font-weight:normal;transform:scaleX(0.965);">www.</div>
<div class="t" style="left:1800.7px;top:993.4px;font-size:15px;color:#ffffff;font-weight:normal;transform:scaleX(1.043);">ideastatica</div>
<div class="t" style="left:1875.5px;top:993.4px;font-size:15px;color:#f07024;font-weight:normal;transform:scaleX(0.932);">.com</div>
<div class="t" style="left:30.3px;top:993.1px;font-size:15px;color:#8a8a8a;font-weight:bold;transform:scaleX(0.936);">Design code:</div>
<div class="t" style="left:125.0px;top:993.1px;font-size:15px;color:#fff;font-weight:bold;transform:scaleX(0.945);">EN</div>
<div class="t" style="left:170.6px;top:993.1px;font-size:15px;color:#8a8a8a;font-weight:bold;transform:scaleX(0.913);">Analysis:</div>
<div class="t" style="left:237.7px;top:993.1px;font-size:15px;color:#fff;font-weight:bold;transform:scaleX(0.944);">Stress, strain</div>
<div class="t" style="left:353.6px;top:993.1px;font-size:15px;color:#8a8a8a;font-weight:bold;transform:scaleX(0.949);">Load effects:</div>
<div class="t" style="left:449.5px;top:993.1px;font-size:15px;color:#fff;font-weight:bold;transform:scaleX(0.982);">In equilibrium</div>
<div class="t" style="left:572.4px;top:993.1px;font-size:15px;color:#8a8a8a;font-weight:bold;transform:scaleX(0.944);">Units:</div>
<div class="t" style="left:623.4px;top:993.1px;font-size:15px;color:#fff;font-weight:bold;">mm</div>
<svg style="left:0;top:0" width="1920" height="1020" viewBox="0 0 1920 1020"><path d="M1421 836.3 H1899.3 Q1907.3 836.3 1907.3 844.3 V858.3 Q1907.3 866.3 1899.3 866.3 H1421 Q1413.2 866.3 1413.2 858.3 V844.3 Q1413.2 836.3 1421 836.3 Z M1417 834 V863 H1904 V834 Z" fill="#ffffff" fill-rule="evenodd"/><rect x="1413.2" y="836.3" width="494.1" height="30" rx="8" fill="none" stroke="#ff0000" stroke-width="3.9"/></svg>
</body></html>
